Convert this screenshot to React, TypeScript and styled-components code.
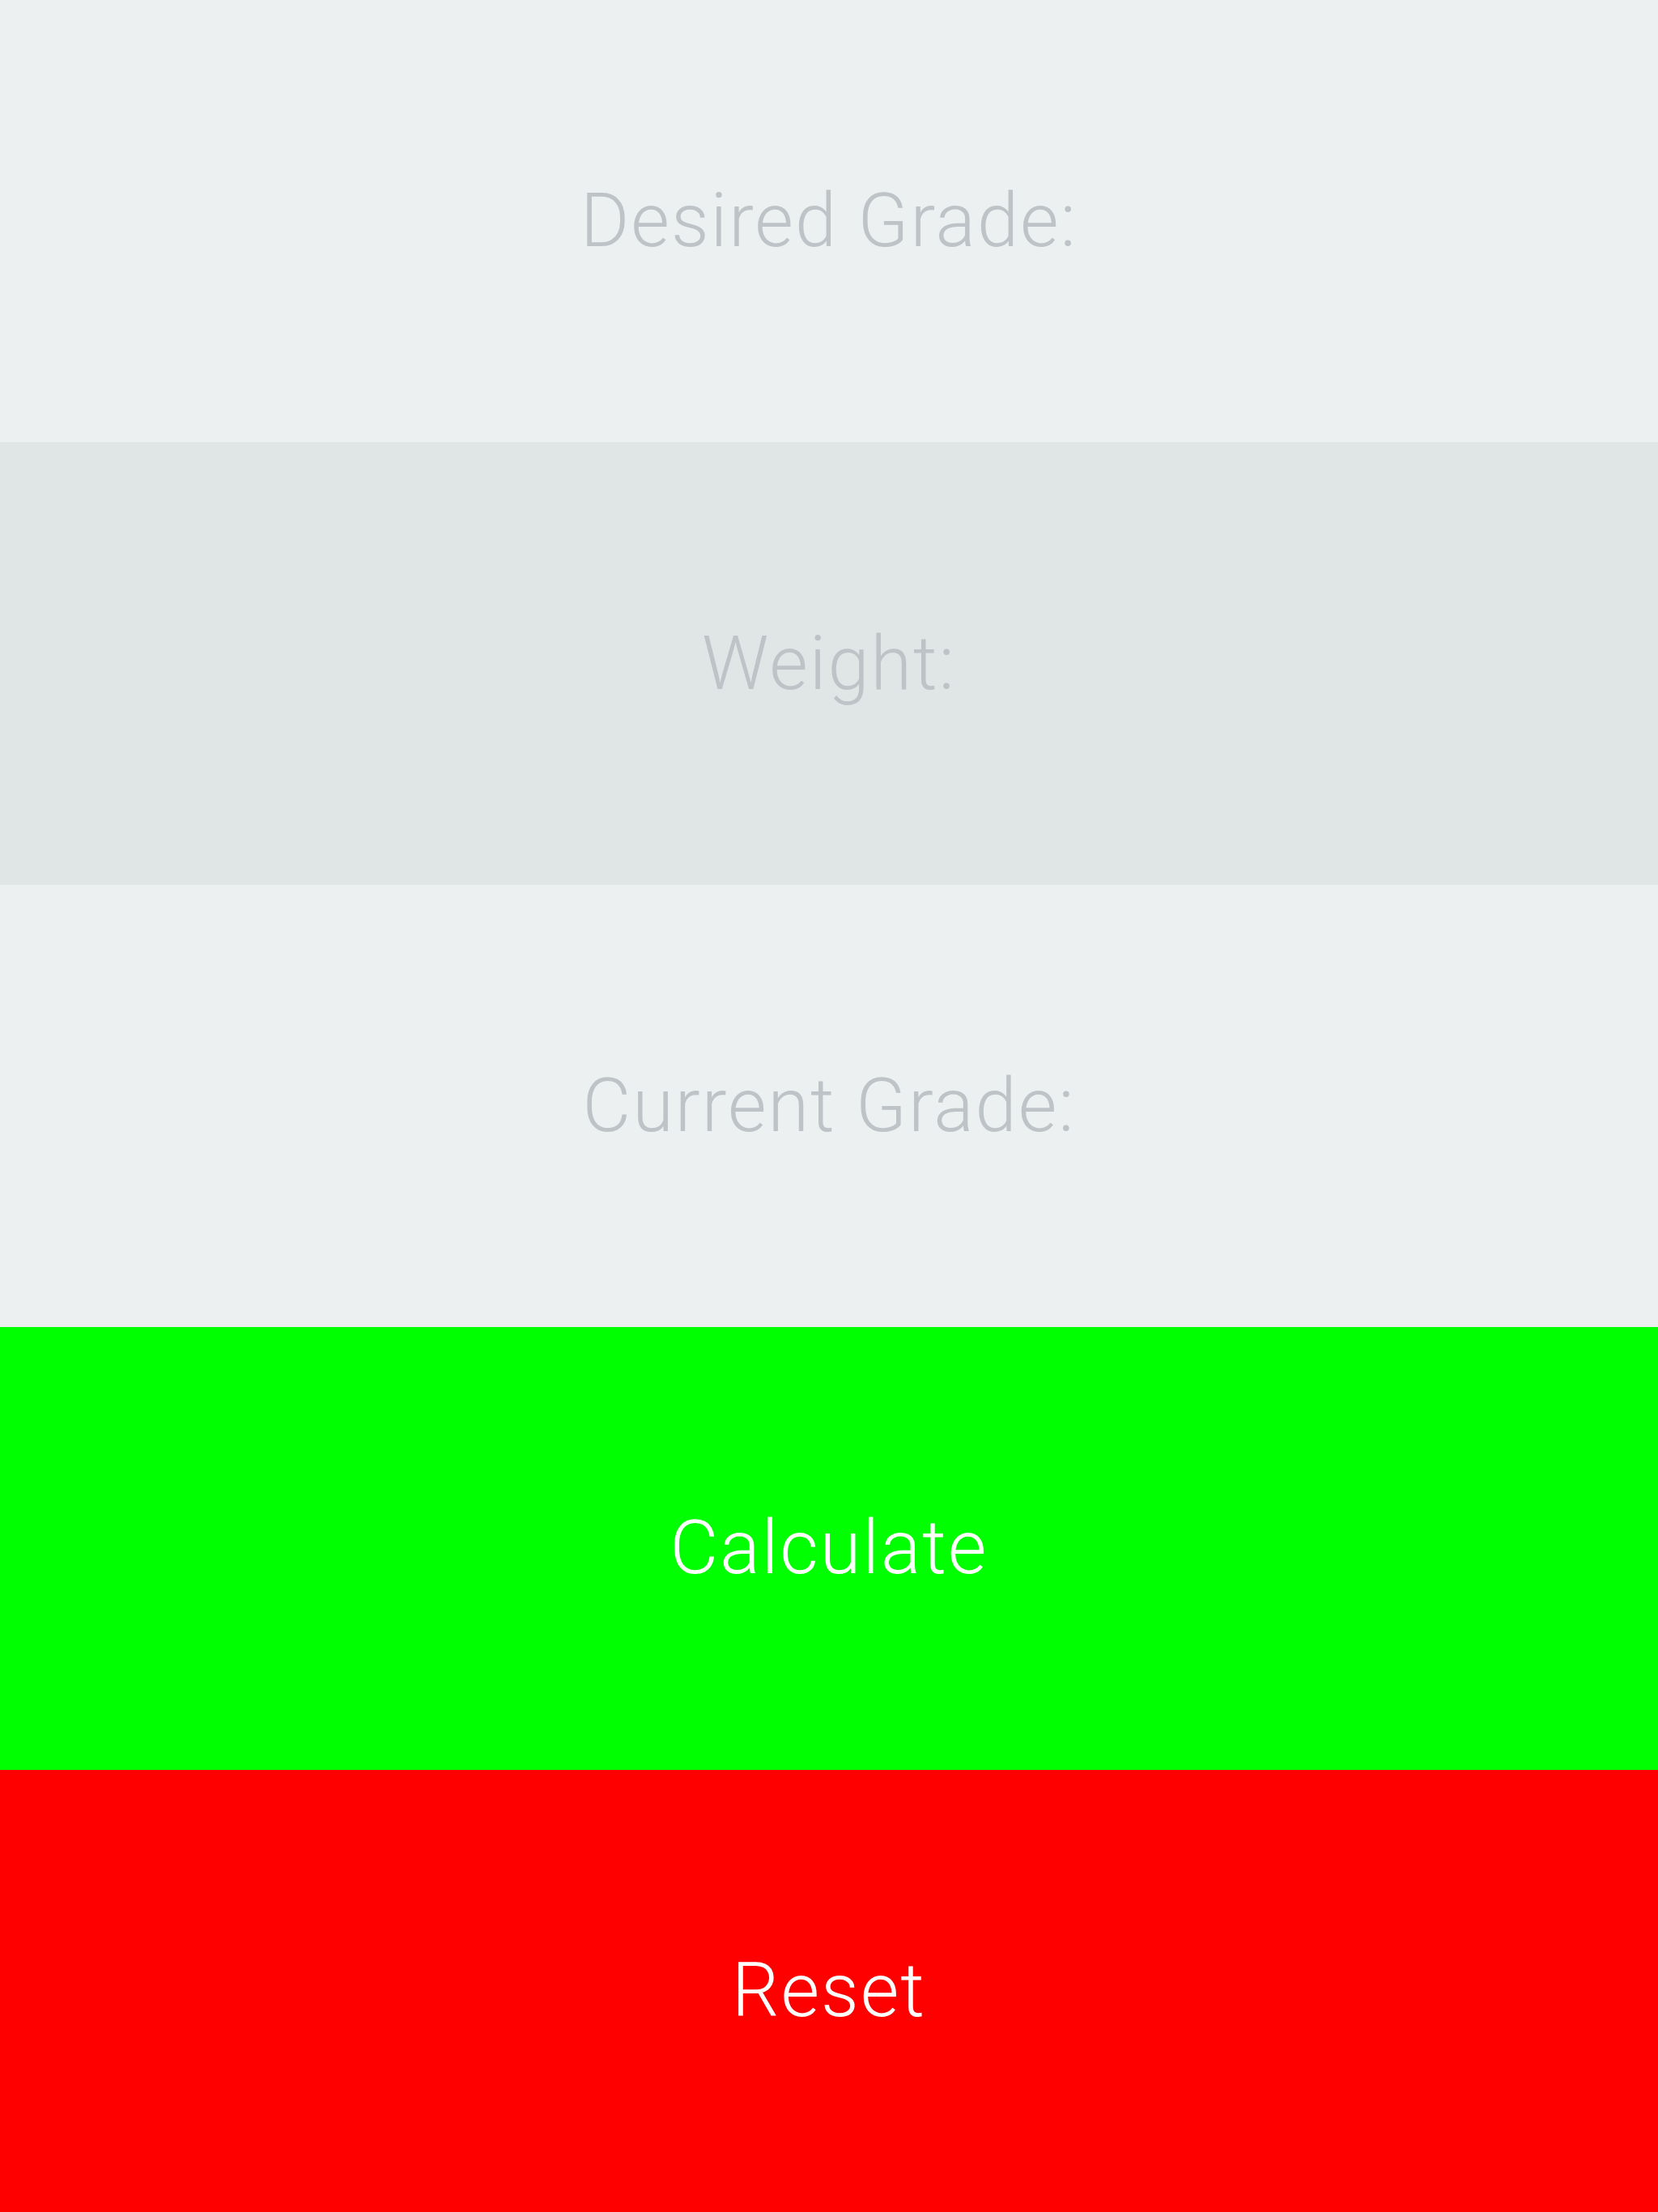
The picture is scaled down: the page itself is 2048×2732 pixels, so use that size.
import React from "react";
import styled, { createGlobalStyle } from "styled-components";

const Global = createGlobalStyle`
  html, body { margin: 0; padding: 0; }
  body { font-family: Roboto, "Liberation Sans", sans-serif; }
`;

const Screen = styled.div`
  display: flex;
  flex-direction: column;
  width: 2048px;
  height: 2732px;
`;

const Band = styled.div<{ $bg: string; $fg: string }>`
  flex: 1;
  display: flex;
  align-items: center;
  justify-content: center;
  background: ${(p) => p.$bg};
  color: ${(p) => p.$fg};
  font-family: Roboto, "Liberation Sans", sans-serif;
  font-weight: 300;
  font-size: 92px;
  letter-spacing: 2px;
  line-height: 1;
`;

const rows = [
  { label: "Desired Grade:", bg: "#ECF0F1", fg: "#BDC3C7" },
  { label: "Weight:", bg: "#E0E5E6", fg: "#BDC3C7" },
  { label: "Current Grade:", bg: "#ECF0F1", fg: "#BDC3C7" },
  { label: "Calculate", bg: "#00FF00", fg: "#FFFFFF" },
  { label: "Reset", bg: "#FF0000", fg: "#FFFFFF" },
];

export default function App() {
  return (
    <>
      <Global />
      <Screen>
        {rows.map((r) => (
          <Band key={r.label} $bg={r.bg} $fg={r.fg}>
            {r.label}
          </Band>
        ))}
      </Screen>
    </>
  );
}
